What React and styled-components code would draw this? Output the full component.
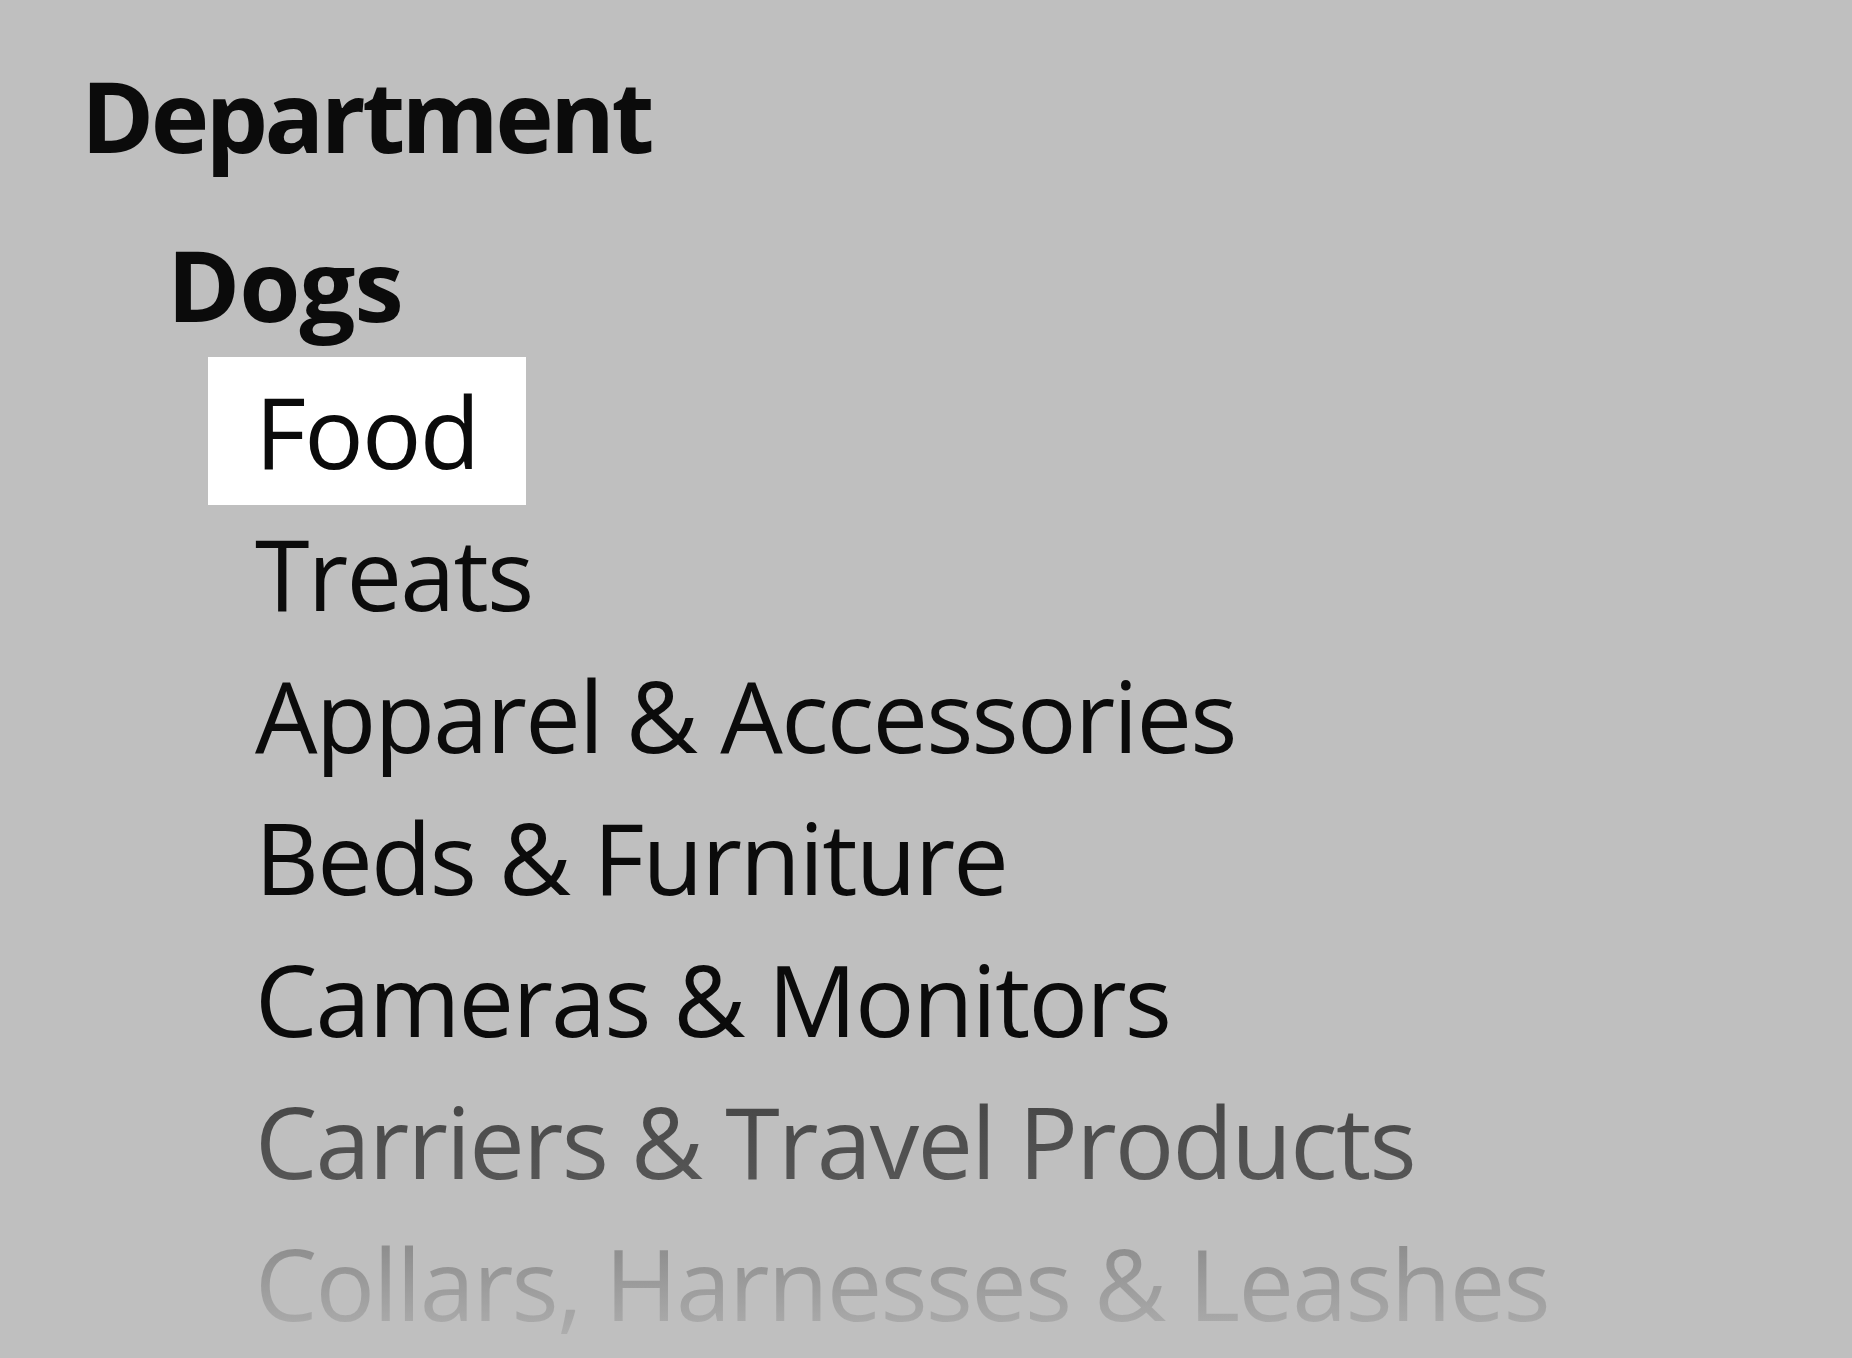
import React from 'react'
import styled, { createGlobalStyle } from 'styled-components'

const GlobalStyle = createGlobalStyle`
    html, body {
        margin:0;
        padding:0;
        background:#bfbfbf;
    }
    body {
        font-family:"Open Sans", "Noto Sans", sans-serif;
        color:#0b0b0b;
    }
`

const categories = [
    { label: 'Food', active: true },
    { label: 'Treats' },
    { label: 'Apparel & Accessories' },
    { label: 'Beds & Furniture' },
    { label: 'Cameras & Monitors' },
    { label: 'Carriers & Travel Products', fade: 'mid' },
    { label: 'Collars, Harnesses & Leashes', fade: 'far' },
]

function App() {
    return (
        <Page>
            <GlobalStyle />
            <Heading spacing={-3.6}>Department</Heading>
            <SubHeading spacing={-1}>Dogs</SubHeading>
            <List>
                {categories.map((c) => (
                    <Item key={c.label}>
                        {c.active ? <Selected>{c.label}</Selected> : <Label fade={c.fade}>{c.label}</Label>}
                    </Item>
                ))}
            </List>
        </Page>
    )
}

export default App

const Page = styled.div`
    width:100%;
    height:1358px;
    overflow:hidden;
    box-sizing:border-box;
    padding:44px 0 0 81px;
    display:flex;
    flex-direction:column;
    align-items:flex-start;
`
const Heading = styled.div`
    font-size:99px;
    font-weight:700;
    line-height:142px;
    letter-spacing:${(p) => p.spacing}px;
    margin-bottom:27px;
`
const SubHeading = styled(Heading)`
    margin-left:86px;
    margin-bottom:5px;
`
const List = styled.div`
    display:flex;
    flex-direction:column;
    align-items:flex-start;
    margin-left:174px;
`
const Item = styled.div`
    display:flex;
    font-size:99px;
    line-height:142px;
    letter-spacing:-1.8px;
    white-space:nowrap;
`
const Selected = styled.span`
    background:#ffffff;
    padding:3px 47px 3px 47px;
    margin:-3px 0 -3px -47px;
`
const fades = {
    mid: 'linear-gradient(180deg, #474747 20%, #595959 90%)',
    far: 'linear-gradient(180deg, #8c8c8c 20%, #afafaf 90%)',
}
const Label = styled.span`
    ${(p) => p.fade && `
        background:${fades[p.fade]};
        -webkit-background-clip:text;
        background-clip:text;
        color:transparent;
    `}
`
